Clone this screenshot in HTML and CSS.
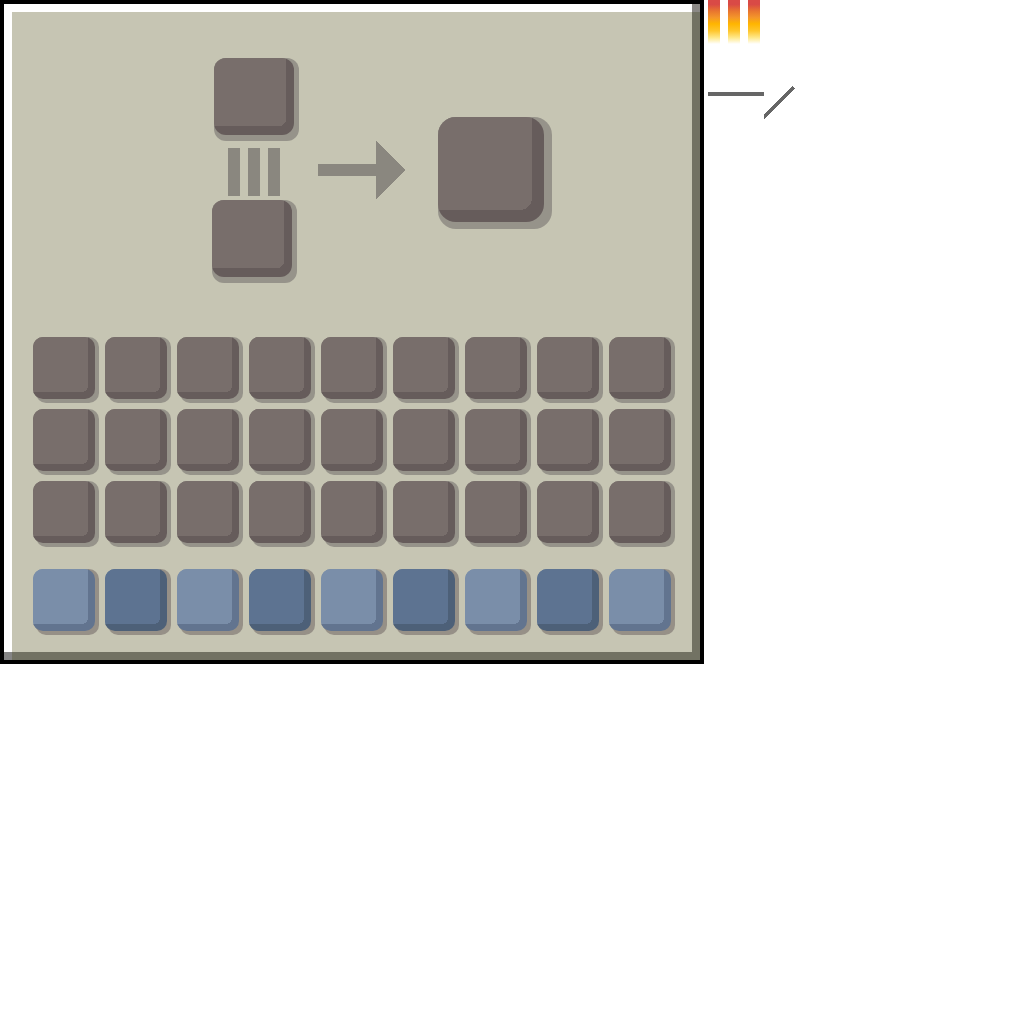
FILE: index.html
```
<!DOCTYPE html>
<html lang="en">
<head>
<meta charset="utf-8">
<title>Inventory</title>
<link rel="stylesheet" href="styles.css">
</head>
<body>
<main class="screen">
  <section class="window">
    <div class="panel">
      <div class="craft">
        <div class="inputs">
          <button class="slot medium upper" aria-label="Input"></button>
          <div class="bars"><i></i><i></i><i></i></div>
          <button class="slot medium" aria-label="Fuel"></button>
        </div>
        <svg class="arrow" width="87" height="58" viewBox="0 0 87 58" shape-rendering="crispEdges" aria-hidden="true"><path d="M0 23H58V0L87 29L58 58V35H0Z"/></svg>
        <button class="slot large" aria-label="Output"></button>
      </div>
      <div class="grid">
        <button class="slot" aria-label="Slot 1"></button><button class="slot" aria-label="Slot 2"></button><button class="slot" aria-label="Slot 3"></button>
        <button class="slot" aria-label="Slot 4"></button><button class="slot" aria-label="Slot 5"></button><button class="slot" aria-label="Slot 6"></button>
        <button class="slot" aria-label="Slot 7"></button><button class="slot" aria-label="Slot 8"></button><button class="slot" aria-label="Slot 9"></button>
        <button class="slot" aria-label="Slot 10"></button><button class="slot" aria-label="Slot 11"></button><button class="slot" aria-label="Slot 12"></button>
        <button class="slot" aria-label="Slot 13"></button><button class="slot" aria-label="Slot 14"></button><button class="slot" aria-label="Slot 15"></button>
        <button class="slot" aria-label="Slot 16"></button><button class="slot" aria-label="Slot 17"></button><button class="slot" aria-label="Slot 18"></button>
        <button class="slot" aria-label="Slot 19"></button><button class="slot" aria-label="Slot 20"></button><button class="slot" aria-label="Slot 21"></button>
        <button class="slot" aria-label="Slot 22"></button><button class="slot" aria-label="Slot 23"></button><button class="slot" aria-label="Slot 24"></button>
        <button class="slot" aria-label="Slot 25"></button><button class="slot" aria-label="Slot 26"></button><button class="slot" aria-label="Slot 27"></button>
      </div>
      <div class="grid hotbar">
        <button class="slot" aria-label="Hotbar 1"></button><button class="slot" aria-label="Hotbar 2"></button><button class="slot" aria-label="Hotbar 3"></button>
        <button class="slot" aria-label="Hotbar 4"></button><button class="slot" aria-label="Hotbar 5"></button><button class="slot" aria-label="Hotbar 6"></button>
        <button class="slot" aria-label="Hotbar 7"></button><button class="slot" aria-label="Hotbar 8"></button><button class="slot" aria-label="Hotbar 9"></button>
      </div>
    </div>
  </section>
  <aside class="parts">
    <div class="bars heat"><i></i><i></i><i></i></div>
    <svg width="88" height="36" viewBox="0 0 88 36" shape-rendering="crispEdges" aria-hidden="true"><path fill="#666" d="M0 8H56V12H0ZM56 30L84 2L87 4L56 35Z"/></svg>
  </aside>
</main>
</body>
</html>
```
FILE: styles.css
```
body {
  margin: 0;
  background: #fff;
}

.screen {
  display: flex;
  align-items: flex-start;
  gap: 4px;
}

/* The half-tone corners show where the light and dark edges cross. */
.window {
  padding: 8px;
  border: 4px solid #000;
  background:
    linear-gradient(#8b8986, #8b8986) right top / 8px 8px no-repeat,
    linear-gradient(#858585, #858585) left bottom / 8px 8px no-repeat,
    linear-gradient(#727263, #727263) right top / 8px 100% no-repeat,
    linear-gradient(#727263, #727263) left bottom / 100% 8px no-repeat,
    #fff;
}

.panel {
  padding: 46px 21px 21px;
  background: #c6c5b3;
}

.craft {
  display: flex;
  align-items: flex-start;
  padding-left: 179px;
  margin-bottom: 54px;
}

.craft {
  margin-bottom: 60px;
}

.inputs {
  display: flex;
  flex-direction: column;
}

.upper {
  margin-left: 2px;
}

.bars {
  display: flex;
  gap: 8px;
  height: 48px;
  margin: 13px 0 4px 16px;
}

.bars i {
  width: 12px;
  background: #8a877f;
}

.arrow {
  margin: 83px 33px 0 24px;
  fill: #8a877f;
}

.grid {
  display: grid;
  grid-template-columns: repeat(9, 62px);
  gap: 10px;
}

.hotbar {
  margin-top: 26px;
}

/* A slot is a raised key: shadow, body, then the lit face on top. */
.slot {
  --face: #786e6b;
  --side: #665c5b;
  --shade: #96938a;
  --radius: 10px;
  display: block;
  position: relative;
  isolation: isolate;
  width: 62px;
  height: 62px;
  padding: 0;
  border: 0;
  border-radius: var(--radius);
  background:
    radial-gradient(circle at 0 0, var(--face) 6px, transparent 6px) 49px 49px / 6px 6px no-repeat,
    linear-gradient(var(--face), var(--face)) 0 0 / 55px 49px no-repeat,
    linear-gradient(var(--face), var(--face)) 0 0 / 49px 55px no-repeat,
    var(--side);
}

.slot::before,
.slot::after {
  content: "";
  position: absolute;
  z-index: -1;
  border-radius: var(--radius);
}

.slot::before {
  inset: 0 -4px -4px 3px;
  background: var(--shade);
}

.slot::after {
  inset: 0;
  background:
    radial-gradient(circle at 0 0, var(--face) 6px, transparent 6px) 49px 49px / 6px 6px no-repeat,
    linear-gradient(var(--face), var(--face)) 0 0 / 55px 49px no-repeat,
    linear-gradient(var(--face), var(--face)) 0 0 / 49px 55px no-repeat,
    var(--side);
}

.medium {
  --radius: 12px;
  width: 80px;
  height: 77px;
}

.medium::before {
  inset: 0 -5px -6px 0;
}

.medium::after {
  background:
    radial-gradient(circle at 0 0, var(--face) 7px, transparent 7px) 65px 61px / 7px 7px no-repeat,
    linear-gradient(var(--face), var(--face)) 0 0 / 72px 61px no-repeat,
    linear-gradient(var(--face), var(--face)) 0 0 / 65px 68px no-repeat,
    var(--side);
}

.large {
  --radius: 18px;
  width: 106px;
  height: 105px;
  margin-top: 59px;
}

.large::before {
  inset: 0 -8px -7px 0;
}

.large::after {
  background:
    radial-gradient(circle at 0 0, var(--face) 12px, transparent 12px) 82px 81px / 12px 12px no-repeat,
    linear-gradient(var(--face), var(--face)) 0 0 / 94px 81px no-repeat,
    linear-gradient(var(--face), var(--face)) 0 0 / 82px 93px no-repeat,
    var(--side);
}

.hotbar .slot {
  --face: #7a8ea9;
  --side: #62748f;
  --shade: #969087;
}

.hotbar .slot:nth-child(even) {
  --face: #5d7391;
  --side: #4d6078;
}

.parts svg {
  display: block;
}

.heat {
  height: 44px;
  margin: 0 0 40px;
}

.heat i {
  background: linear-gradient(#d94a46 0 10%, #e8752f 25%, #f4962a 40%, #ffb500 54%, #ffc62c 70%, #ffe98c 86%, #fff);
}
```
